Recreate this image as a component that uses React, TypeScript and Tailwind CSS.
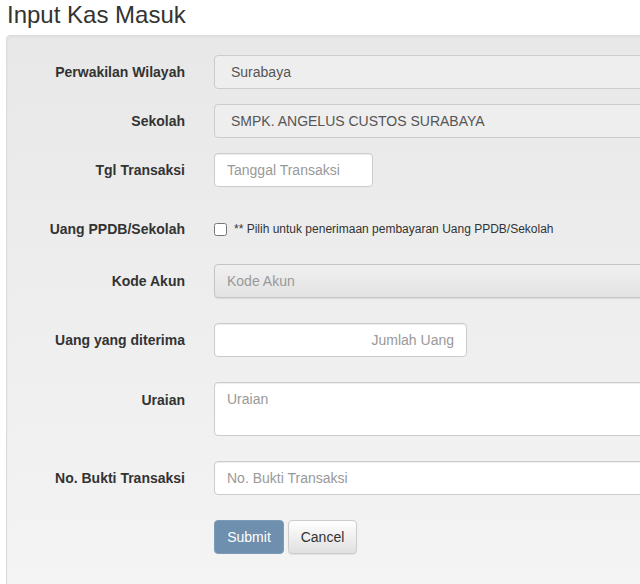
export default function App() {
  const label = "w-[178px] shrink-0 text-right text-[14px] font-bold text-[#333]";
  const input =
    "h-[34px] rounded-[4px] border border-[#ccc] bg-white px-3 text-[14px] text-[#555] shadow-[inset_0_1px_1px_rgba(0,0,0,0.075)] placeholder:text-[#999] outline-none";

  return (
    <div
      className="h-[584px] w-[640px] overflow-hidden bg-white"
      style={{ fontFamily: '"Liberation Sans", Arial, sans-serif' }}
    >
      {/* Title */}
      <h1 className="pl-[7px] pt-[1px] text-[24px] leading-[28px] font-normal text-[#333]">
        Input Kas Masuk
      </h1>

      {/* Well */}
      <div className="ml-[6px] mt-[6px] h-[600px] w-[720px] rounded-[4px] border border-[#dcdcdc] bg-gradient-to-b from-[#e8e8e8] to-[#f5f5f5] pt-[19px] shadow-[inset_0_1px_3px_rgba(0,0,0,0.05)]">
        <form className="flex flex-col">
          {/* Perwakilan Wilayah */}
          <div className="flex items-center gap-[29px]">
            <label className={label}>Perwakilan Wilayah</label>
            <div className="flex h-[34px] w-[480px] items-center rounded-[4px] border border-[#ccc] bg-[#eee] pl-4 text-[14px] text-[#555]">
              Surabaya
            </div>
          </div>

          {/* Sekolah */}
          <div className="mt-[15px] flex items-center gap-[29px]">
            <label className={label}>Sekolah</label>
            <div className="flex h-[34px] w-[480px] items-center rounded-[4px] border border-[#ccc] bg-[#eee] pl-4 text-[14px] text-[#555]">
              SMPK. ANGELUS CUSTOS SURABAYA
            </div>
          </div>

          {/* Tgl Transaksi */}
          <div className="mt-[15px] flex items-center gap-[29px]">
            <label className={label}>Tgl Transaksi</label>
            <input className={`${input} w-[159px]`} placeholder="Tanggal Transaksi" />
          </div>

          {/* Uang PPDB */}
          <div className="mt-[25px] flex h-[34px] items-center gap-[29px]">
            <label className={label}>Uang PPDB/Sekolah</label>
            <div className="flex items-center gap-[7px]">
              <input type="checkbox" className="m-0 h-[13px] w-[13px]" />
              <span className="text-[12px] text-[#333]">
                ** Pilih untuk penerimaan pembayaran Uang PPDB/Sekolah
              </span>
            </div>
          </div>

          {/* Kode Akun */}
          <div className="mt-[18px] flex items-center gap-[29px]">
            <label className={label}>Kode Akun</label>
            <div className="flex h-[34px] w-[480px] items-center rounded-[4px] border border-[#c5c5c5] bg-gradient-to-b from-[#f0f0f0] to-[#e3e3e3] pl-3 text-[14px] text-[#999] shadow-[0_1px_1px_rgba(0,0,0,0.08)]">
              Kode Akun
            </div>
          </div>

          {/* Uang yang diterima */}
          <div className="mt-[25px] flex items-center gap-[29px]">
            <label className={label}>Uang yang diterima</label>
            <input className={`${input} w-[253px] text-right`} placeholder="Jumlah Uang" />
          </div>

          {/* Uraian */}
          <div className="mt-[25px] flex items-start gap-[29px]">
            <label className={`${label} pt-[8px]`}>Uraian</label>
            <textarea
              className="h-[54px] w-[480px] resize-none rounded-[4px] border border-[#ccc] bg-white px-3 py-[6px] text-[14px] text-[#555] shadow-[inset_0_1px_1px_rgba(0,0,0,0.075)] outline-none placeholder:text-[#999]"
              placeholder="Uraian"
            />
          </div>

          {/* No. Bukti */}
          <div className="mt-[25px] flex items-center gap-[29px]">
            <label className={label}>No. Bukti Transaksi</label>
            <input className={`${input} w-[480px]`} placeholder="No. Bukti Transaksi" />
          </div>

          {/* Buttons */}
          <div className="mt-[25px] flex gap-[4px] pl-[207px]">
            <button
              type="button"
              className="h-[34px] w-[70px] rounded-[4px] border border-[#7d9bb8] bg-[#6e8fad] text-[14px] text-white"
            >
              Submit
            </button>
            <button
              type="button"
              className="h-[34px] w-[69px] rounded-[4px] border border-[#ccc] bg-gradient-to-b from-white to-[#e0e0e0] text-[14px] text-[#333] shadow-[0_1px_1px_rgba(0,0,0,0.08)]"
            >
              Cancel
            </button>
          </div>
        </form>
      </div>
    </div>
  );
}
